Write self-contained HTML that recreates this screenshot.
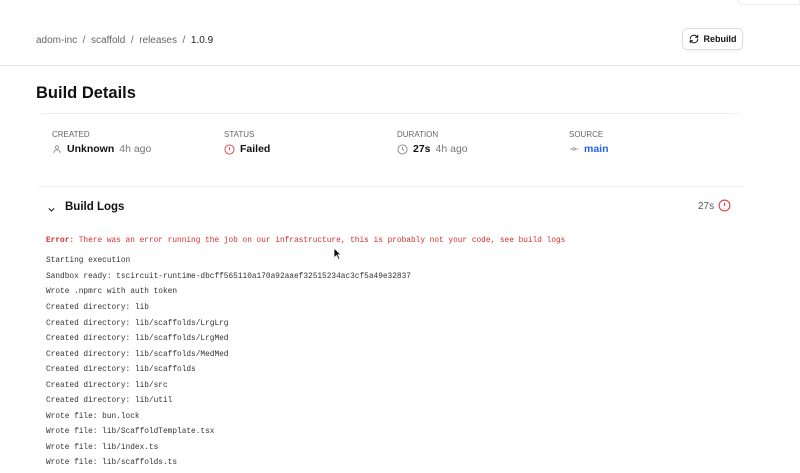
<!DOCTYPE html>
<html><head><style>
*{margin:0;padding:0;box-sizing:border-box}
body{width:800px;height:465px;overflow:hidden;background:#fff;font-family:"Liberation Sans",sans-serif;color:#111;position:relative}
.a{position:absolute;white-space:nowrap}
.crumb{font-size:10px;color:#666;top:35px;left:36px}
.crumb b{font-weight:normal;color:#222}
.btn{left:682px;top:28px;width:61px;height:22px;border:1px solid #ddd;border-radius:5px;font-size:9px;font-weight:bold;display:flex;align-items:center;justify-content:center;gap:5px;box-shadow:0 1px 2px rgba(0,0,0,.06)}
.hr{left:0;right:0;top:65px;height:1px;background:#e8e8e8}
h1{position:absolute;left:36px;top:84px;font-size:16.5px;font-weight:bold}
.card{left:36px;top:113px;width:706px;height:360px;border-top:1px solid #eee;border-radius:8px}
.lbl{font-size:8px;color:#666;top:130px}
.val{font-size:10.5px;top:143px;display:flex;align-items:center;gap:5px}
.val .g{color:#777}
.div{left:38px;width:704px;top:186px;height:1px;background:#eee}
.logs{font-family:"Liberation Mono",monospace;font-size:7.8px;color:#333;left:46px}
</style></head><body>
<div class="a" style="left:738px;top:0;width:62px;height:5px;border:1px solid #eee;border-top:none;border-radius:0 0 0 4px"></div>
<div class="a crumb">adom-inc&nbsp;&nbsp;/&nbsp;&nbsp;scaffold&nbsp;&nbsp;/&nbsp;&nbsp;releases&nbsp;&nbsp;/&nbsp;&nbsp;<b>1.0.9</b></div>
<div class="a btn"><svg width="10" height="10" viewBox="0 0 24 24" fill="none" stroke="#222" stroke-width="2.5" stroke-linecap="round"><path d="M3 12a9 9 0 0 1 15-6.7L21 8M21 3v5h-5M21 12a9 9 0 0 1-15 6.7L3 16M3 21v-5h5"/></svg>Rebuild</div>
<div class="a hr"></div>
<h1>Build Details</h1>
<div class="a card"></div>
<div class="a lbl" style="left:52px">CREATED</div>
<div class="a lbl" style="left:224px">STATUS</div>
<div class="a lbl" style="left:397px">DURATION</div>
<div class="a lbl" style="left:569px">SOURCE</div>
<div class="a val" style="left:52px"><svg width="10" height="10" viewBox="0 0 24 24" fill="none" stroke="#888" stroke-width="2"><circle cx="12" cy="8" r="4"/><path d="M4 22a8 8 0 0 1 16 0"/></svg><b>Unknown</b><span class="g">4h ago</span></div>
<div class="a val" style="left:224px"><svg width="11" height="11" viewBox="0 0 24 24" fill="none" stroke="#e03e3e" stroke-width="2"><circle cx="12" cy="12" r="10"/><path d="M12 7v6M12 16.5v.5"/></svg><b>Failed</b></div>
<div class="a val" style="left:397px"><svg width="11" height="11" viewBox="0 0 24 24" fill="none" stroke="#888" stroke-width="2"><circle cx="12" cy="12" r="10"/><path d="M12 6v6l4 2"/></svg><b>27s</b><span class="g">4h ago</span></div>
<div class="a val" style="left:569px"><svg width="10" height="10" viewBox="0 0 24 24" fill="none" stroke="#888" stroke-width="2"><circle cx="12" cy="12" r="3"/><path d="M2 12h7M15 12h7"/></svg><span style="color:#2563eb;font-weight:bold">main</span></div>
<div class="a div"></div>
<div class="a" style="left:47px;top:201px"><svg width="9" height="9" viewBox="0 0 24 24" fill="none" stroke="#222" stroke-width="3"><path d="M5 9l7 7 7-7"/></svg></div>
<div class="a" style="left:65px;top:201px;font-size:11.5px;font-weight:bold">Build Logs</div>
<div class="a" style="left:698px;top:201px;font-size:10px;color:#555">27s</div>
<div class="a" style="left:718px;top:199px"><svg width="13" height="13" viewBox="0 0 24 24" fill="none" stroke="#e03e3e" stroke-width="2"><circle cx="12" cy="12" r="10"/><path d="M12 7v6M12 16.5v.5"/></svg></div>
<div class="a logs" style="top:236.5px;color:#d32f2f"><b>Error:</b> There was an error running the job on our infrastructure, this is probably not your code, see build logs</div>
<div class="a logs" style="top:257px">Starting execution</div>
<div class="a logs" style="top:272.5px">Sandbox ready: tscircuit-runtime-dbcff565110a170a92aaef32515234ac3cf5a49e32837</div>
<div class="a logs" style="top:288px">Wrote .npmrc with auth token</div>
<div class="a logs" style="top:304px">Created directory: lib</div>
<div class="a logs" style="top:319.5px">Created directory: lib/scaffolds/LrgLrg</div>
<div class="a logs" style="top:335px">Created directory: lib/scaffolds/LrgMed</div>
<div class="a logs" style="top:350.5px">Created directory: lib/scaffolds/MedMed</div>
<div class="a logs" style="top:366px">Created directory: lib/scaffolds</div>
<div class="a logs" style="top:381.5px">Created directory: lib/src</div>
<div class="a logs" style="top:397px">Created directory: lib/util</div>
<div class="a logs" style="top:412.5px">Wrote file: bun.lock</div>
<div class="a logs" style="top:428px">Wrote file: lib/ScaffoldTemplate.tsx</div>
<div class="a logs" style="top:443.5px">Wrote file: lib/index.ts</div>
<div class="a logs" style="top:459px">Wrote file: lib/scaffolds.ts</div>
<svg class="a" style="left:333px;top:247px" width="9" height="13" viewBox="0 0 9 13"><path d="M1 1v10l2.5-2.5 2 4 1.5-.7-2-4H8z" fill="#111" stroke="#fff" stroke-width=".8"/></svg>
</body></html>
